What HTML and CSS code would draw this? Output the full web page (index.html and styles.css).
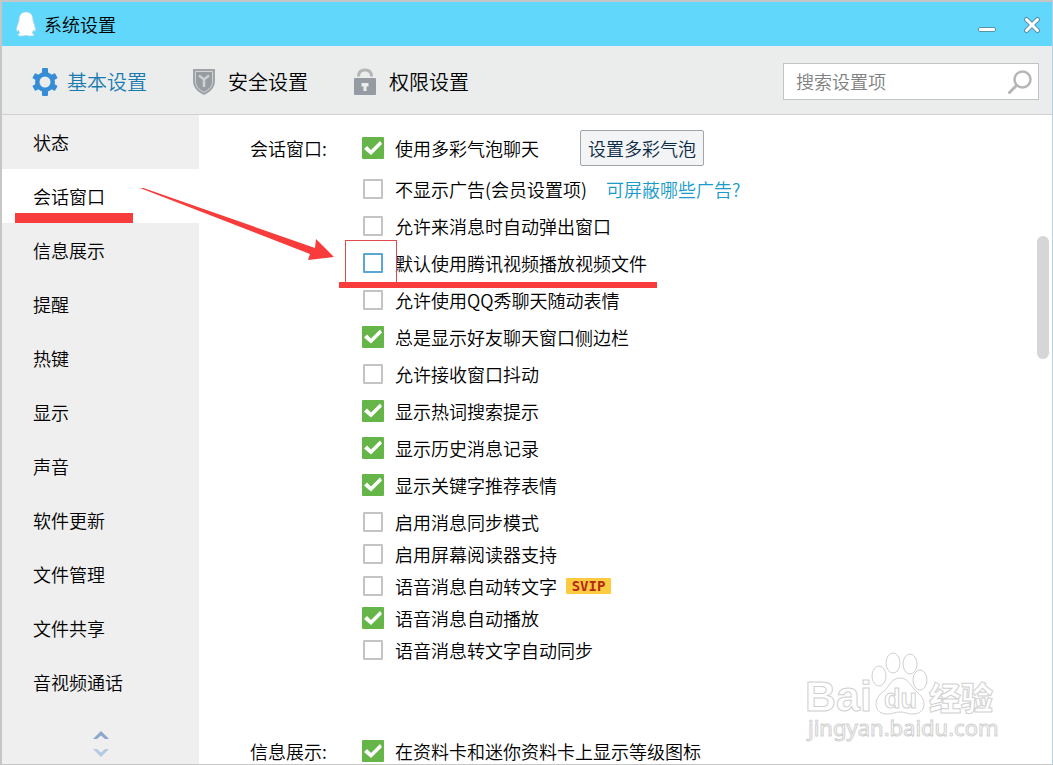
FILE: index.html
```
<!DOCTYPE html>
<html lang="zh-CN">
<head>
  <meta charset="UTF-8">
  <meta name="viewport" content="width=device-width, initial-scale=1.0">
  <title>系统设置</title>
  <link rel="stylesheet" href="styles.css">
</head>
<body>
<div class="window">
  <header class="titlebar">
    <svg class="penguin" width="20" height="26" viewBox="0 0 20 26">
      <path d="M10 1C5.500 1 3 4 3 9c0 2-2.500 6-2.500 10 0 1.800 1 1.500 2 0 .3 1.500 1 2.500 1.500 3-1.500.5-2 1.200-2 2 0 1.500 6 1.300 8 .2 2 1.100 8 1.300 8-.2 0-.8-.5-1.500-2-2 .5-.5 1.200-1.500 1.500-3 1 1.500 2 1.800 2 0 0-4-2.500-8-2.500-10 0-5-2.500-8-7-8z" fill="#fff" stroke="#a9d5e6" stroke-width=".8"/>
    </svg>
    <h1>系统设置</h1>
    <div class="win-buttons">
      <button type="button" aria-label="最小化">
        <svg width="20" height="20" viewBox="0 0 20 20"><rect x="1.500" y="13.500" width="17" height="4" rx="1.500" fill="#fff" stroke="#5794aa"/></svg>
      </button>
      <button type="button" aria-label="关闭">
        <svg width="20" height="20" viewBox="0 0 20 20" fill="none" stroke-linecap="round">
          <path d="M4.500 5.500l11 11m0-11l-11 11" stroke="#5794aa" stroke-width="5"/>
          <path d="M4.500 5.500l11 11m0-11l-11 11" stroke="#fff" stroke-width="3"/>
        </svg>
      </button>
    </div>
  </header>

  <div class="toolbar">
    <nav class="tabs">
      <a class="tab active" href="#basic">
        <svg width="26" height="28" viewBox="0 0 26 28">
          <g fill="#368dd6">
            <circle cx="13" cy="14" r="10"/>
            <rect x="10" y="0" width="6" height="28" rx="1"/>
            <rect x="10" y="1" width="6" height="26" rx="1" transform="rotate(60 13 14)"/>
            <rect x="10" y="1" width="6" height="26" rx="1" transform="rotate(120 13 14)"/>
          </g>
          <circle cx="13" cy="14" r="5.500" fill="#ebeded"/>
        </svg>
        基本设置
      </a>
      <a class="tab" href="#security">
        <svg width="26" height="28" viewBox="0 0 26 28">
          <path d="M0 1h22v12c0 6.500-4.500 11-11 14C4.500 24 0 19.500 0 13z" fill="#a0a4a9"/>
          <path d="M2.500 3.500h17v9.500c0 5-3 8.500-8.500 11.200C5.500 21.500 2.500 18 2.500 13z" fill="#969ca1" stroke="#d0d3d6"/>
          <path d="M6 7.500l5 4 5-4M11 11v8" fill="none" stroke="#cdd1d3" stroke-width="2.500"/>
        </svg>
        安全设置
      </a>
      <a class="tab" href="#privacy">
        <svg width="26" height="28" viewBox="0 0 26 28">
          <path d="M4.500 8.500C4.500 4 7 2 11 2s6.500 2 6.500 6.500" fill="none" stroke="#b2b4b7" stroke-width="3"/>
          <rect x="0" y="10" width="22" height="17" rx="1" fill="#949ba2"/>
          <path d="M7.500 15h7v3.500h-2V23h-3v-4.500h-2z" fill="#ebeded"/>
        </svg>
        权限设置
      </a>
    </nav>
    <form class="search">
      <input type="text" placeholder="搜索设置项" aria-label="搜索设置项">
      <button type="button" aria-label="搜索">
        <svg width="26" height="26" viewBox="0 0 26 26" fill="none" stroke="#b6b6b6">
          <circle cx="15.500" cy="10.500" r="8" stroke-width="2.500"/>
          <path d="M9.500 16.500l-7 7" stroke-width="3" stroke-linecap="round"/>
        </svg>
      </button>
    </form>
  </div>

  <div class="main">
    <nav class="sidebar">
      <a href="#">状态</a>
      <a href="#" class="active">会话窗口</a>
      <a href="#">信息展示</a>
      <a href="#">提醒</a>
      <a href="#">热键</a>
      <a href="#">显示</a>
      <a href="#">声音</a>
      <a href="#">软件更新</a>
      <a href="#">文件管理</a>
      <a href="#">文件共享</a>
      <a href="#">音视频通话</a>
      <div class="sidebar-scroll">
        <button type="button" aria-label="向上"><svg width="16" height="9" viewBox="0 0 16 9"><path d="M0 9l8-8 8 8h-4L8 5.500 4 9z" fill="#8fa6cb"/></svg></button>
        <button type="button" aria-label="向下"><svg width="16" height="9" viewBox="0 0 16 9"><path d="M0 0l8 8 8-8h-4L8 3.500 4 0z" fill="#b4cae0"/></svg></button>
      </div>
    </nav>

    <main class="content">
      <section class="group">
        <h2>会话窗口:</h2>
        <div class="options">
          <div class="row first">
            <label><input type="checkbox" checked>使用多彩气泡聊天</label>
            <button type="button" class="btn">设置多彩气泡</button>
          </div>
          <div class="row">
            <label><input type="checkbox">不显示广告(会员设置项)</label>
            <a class="help" href="#">可屏蔽哪些广告?</a>
          </div>
          <div class="row"><label><input type="checkbox">允许来消息时自动弹出窗口</label></div>
          <div class="row marked"><label><input type="checkbox" class="hot">默认使用腾讯视频播放视频文件</label></div>
          <div class="row"><label><input type="checkbox">允许使用QQ秀聊天随动表情</label></div>
          <div class="row"><label><input type="checkbox" checked>总是显示好友聊天窗口侧边栏</label></div>
          <div class="row"><label><input type="checkbox">允许接收窗口抖动</label></div>
          <div class="row"><label><input type="checkbox" checked>显示热词搜索提示</label></div>
          <div class="row"><label><input type="checkbox" checked>显示历史消息记录</label></div>
          <div class="row"><label><input type="checkbox" checked>显示关键字推荐表情</label></div>
          <div class="compact">
            <div class="row"><label><input type="checkbox">启用消息同步模式</label></div>
            <div class="row"><label><input type="checkbox">启用屏幕阅读器支持</label></div>
            <div class="row"><label><input type="checkbox">语音消息自动转文字</label><span class="svip">SVIP</span></div>
            <div class="row"><label><input type="checkbox" checked>语音消息自动播放</label></div>
            <div class="row"><label><input type="checkbox">语音消息转文字自动同步</label></div>
          </div>
        </div>
      </section>

      <section class="group">
        <h2>信息展示:</h2>
        <div class="options compact">
          <div class="row"><label><input type="checkbox" checked>在资料卡和迷你资料卡上显示等级图标</label></div>
        </div>
      </section>
    </main>

    <div class="scroll-thumb"></div>

    <svg class="arrow" width="196" height="76" viewBox="0 0 196 76">
      <path d="M0 0l2-.5L175 60l1-9 18 18-26 3 2-6z" fill="#f83b3b"/>
    </svg>

    <svg class="watermark" width="196" height="96" viewBox="0 0 196 96">
      <g fill="#fff" stroke="#d0d0d0" stroke-width="1">
        <text class="wm-logo" x="1" y="61">Bai</text>
        <ellipse cx="75" cy="26" rx="7" ry="10"/>
        <ellipse cx="89" cy="13" rx="7" ry="10"/>
        <ellipse cx="106" cy="14" rx="7" ry="10"/>
        <ellipse cx="116" cy="30" rx="7" ry="10"/>
        <path d="M96 28c-8 0-10 7-15 12-5 4-9 8-9 14 0 7 5 10 11 10 5 0 8-2 13-2s8 2 13 2c7 0 11-4 11-10 0-7-5-10-10-15-4-5-7-11-14-11z"/>
        <text class="wm-du" x="80" y="58">du</text>
        <text class="wm-cn" x="125" y="60">经验</text>
        <text class="wm-url" x="4" y="86">jingyan.baidu.com</text>
      </g>
    </svg>
  </div>
</div>
</body>
</html>
```

FILE: styles.css
```
* {
  box-sizing: border-box;
}
body {
  margin: 0;
  font-family: "Noto Sans CJK SC", sans-serif;
  font-size: 18px;
  font-weight: 350;
  line-height: 24px;
  color: #000;
}
h1, h2 {
  margin: 0;
  font-size: 18px;
  font-weight: 350;
}
a {
  color: inherit;
  text-decoration: none;
}
button, input {
  font: inherit;
}
svg {
  display: block;
}
.window {
  display: flex;
  flex-direction: column;
  height: 100vh;
  overflow: hidden;
  background: #fff;
  border: solid #c6c6c6;
  border-width: 2px 1px 1px 2px;
  border-right-color: #b5d3dc;
}

/* title bar */
.titlebar {
  flex: none;
  display: flex;
  align-items: center;
  height: 44px;
  padding: 0 10px 0 14px;
  background: #62d7fc;
}
.titlebar h1 {
  margin-left: 8px;
}
.win-buttons {
  display: flex;
  gap: 25px;
  margin-left: auto;
}
.win-buttons button,
.search button,
.sidebar-scroll button {
  padding: 0;
  border: 0;
  background: none;
  cursor: pointer;
}

/* tabs + search */
.toolbar {
  flex: none;
  display: flex;
  align-items: center;
  justify-content: space-between;
  height: 69px;
  padding: 3px 13px 0 30px;
  background: #ebeded;
  border-bottom: 1px solid #d0d2d2;
}
.tabs {
  display: flex;
  gap: 46px;
}
.tab {
  display: flex;
  align-items: center;
  gap: 9px;
  font-size: 20px;
}
.tab.active {
  color: #1a7bb0;
}
.search {
  display: flex;
  align-items: center;
  width: 256px;
  height: 37px;
  padding: 0 5px 0 12px;
  background: #fff;
  border: 1px solid #bfc5c5;
}
.search input {
  flex: 1;
  min-width: 0;
  padding: 0 0 2px;
  border: 0;
  outline: 0;
  background: none;
}
.search input::placeholder {
  color: #808080;
}

/* sidebar */
.main {
  position: relative;
  flex: 1;
  display: flex;
  min-height: 0;
}
.sidebar {
  flex: none;
  display: flex;
  flex-direction: column;
  width: 197px;
  background: #efefef;
}
.sidebar > a {
  position: relative;
  padding: 15px 31px;
}
.sidebar > a.active {
  background: #fff;
}
.sidebar > a.active::after {
  content: "";
  position: absolute;
  left: 13px;
  bottom: 0;
  width: 118px;
  height: 10px;
  background: #f83b3b;
}
.sidebar-scroll {
  display: flex;
  flex-direction: column;
  align-items: center;
  gap: 10px;
  margin-top: 21px;
}

/* options */
.content {
  flex: 1;
  padding: 11px 20px 0 51px;
  overflow: hidden;
}
.group {
  display: flex;
  margin-bottom: 69px;
}
.group h2 {
  width: 111px;
  padding-top: 10px;
}
.group + .group h2 {
  padding-top: 4px;
}
.row {
  position: relative;
  display: flex;
  align-items: center;
  height: 37px;
}
.row.first {
  height: 44px;
}
.compact .row {
  height: 32px;
}
.row + .compact {
  margin-top: 3px;
}
.row label {
  display: flex;
  align-items: center;
  gap: 11px;
}
.row input {
  appearance: none;
  width: 20px;
  height: 20px;
  margin: 0 1px 0 2px;
  background: #fff;
  border: 2px solid #c4c4c4;
  border-radius: 1px;
}
.row input.hot {
  border-color: #5aa7d6;
}
.row input:checked {
  width: 22px;
  height: 22px;
  margin: 0 0 0 1px;
  background: #65b548;
  border: 0;
  border-radius: 1px;
}
.row input:checked::before {
  content: "";
  display: block;
  height: 22px;
  background: #fff;
  clip-path: polygon(2px 12px, 5px 9px, 9px 13px, 18px 4px, 20px 7px, 9px 18px);
}
.btn {
  height: 36px;
  margin-left: 41px;
  padding: 0 7px;
  color: #0b2a45;
  background: #f3f4f5;
  border: 1px solid #a3a6a8;
  border-radius: 2px;
}
.help {
  margin-left: 19px;
  color: #1a9bc9;
}
.svip {
  width: 45px;
  height: 16px;
  margin-left: 9px;
  border-radius: 1px;
  background: #fccb3f;
  color: #b5281c;
  font: bold 14px/16px "DejaVu Sans Mono", monospace;
  text-align: center;
}

/* red marks around the option */
.marked::before,
.marked::after {
  content: "";
  position: absolute;
}
.marked::before {
  left: -16px;
  top: -4px;
  width: 50px;
  height: 44px;
  border: 1px solid #e04a4a;
}
.marked::after {
  left: -22px;
  bottom: -7px;
  width: 318px;
  height: 6px;
  background: #f83b3b;
}
.arrow {
  position: absolute;
  left: 138px;
  top: 73px;
  pointer-events: none;
}

.scroll-thumb {
  position: absolute;
  top: 121px;
  right: 3px;
  width: 12px;
  height: 123px;
  border-radius: 6px;
  background: #d6d6d6;
}
.watermark {
  position: absolute;
  right: 52px;
  bottom: 18px;
  overflow: visible;
}
.wm-logo {
  font: bold 43px "Liberation Sans", sans-serif;
}
.wm-du {
  font: bold 27px "Liberation Sans", sans-serif;
}
.wm-cn {
  font: 900 32px "Noto Sans CJK SC", sans-serif;
}
.wm-url {
  font: 22px "Noto Sans", sans-serif;
}
```
